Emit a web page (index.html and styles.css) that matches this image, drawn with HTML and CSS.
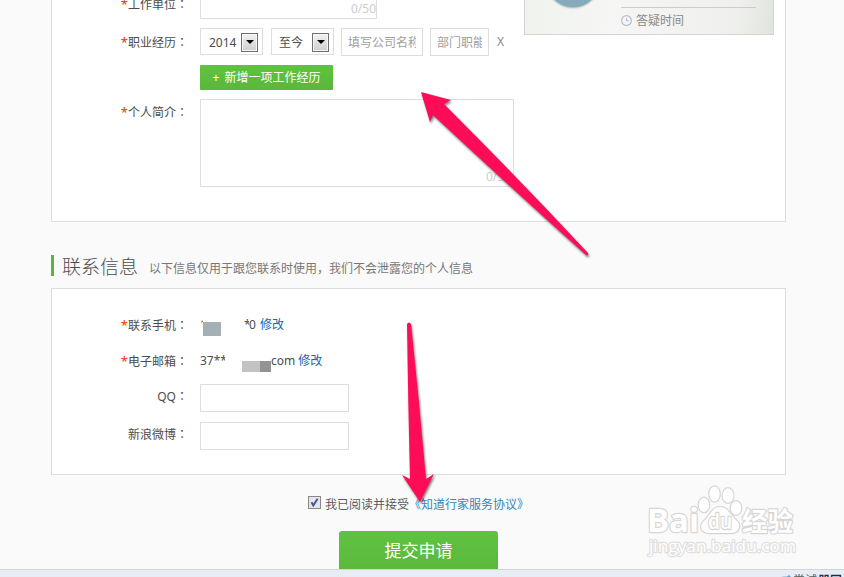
FILE: index.html
```html
<!DOCTYPE html>
<html lang="zh-CN">
<head>
<meta charset="utf-8">
<title>联系信息</title>
<link rel="stylesheet" href="styles.css">
</head>
<body>
<main class="page">
  <section class="card work">
    <div class="form">
      <div class="row unit"><div class="label"><i>*</i>工作单位<b lang="zh-TW">：</b></div><div class="field unit-field"><span class="count">0/50</span></div></div>
      <div class="row career"><div class="label"><i>*</i>职业经历<b lang="zh-TW">：</b></div>
        <div class="select">2014<span class="drop"></span></div>
        <div class="select until">至今<span class="drop"></span></div>
        <div class="field company"><span class="clip">填写公司名称</span></div>
        <div class="field dept"><span class="clip">部门职能</span></div>
        <span class="remove">X</span>
      </div>
      <button class="add"><span class="plus">+</span>新增一项工作经历</button>
      <div class="row bio"><div class="label"><i>*</i>个人简介<b lang="zh-TW">：</b></div><div class="field area"><span class="count">0/50</span></div></div>
    </div>
    <aside class="profile">
      <div class="avatar"></div>
      <div class="hours">
        <svg width="11" height="11" viewBox="0 0 11 11" fill="none" stroke="#b7bfd0"><circle cx="5.5" cy="5.5" r="4.9" stroke-width="1.2"/><path d="M5.5 2.8v3h2.3" stroke-width="1.1"/></svg>答疑时间
      </div>
    </aside>
  </section>
  <header class="heading"><h2>联系信息</h2><p>以下信息仅用于跟您联系时使用，我们不会泄露您的个人信息</p></header>
  <section class="card contact">
    <div class="row phone"><div class="label"><i>*</i>联系手机<b lang="zh-TW">：</b></div><span class="digit">1</span><span class="mask"></span><span class="tail"><span class="star">*</span>0</span><a>修改</a></div>
    <div class="row mail"><div class="label"><i>*</i>电子邮箱<b lang="zh-TW">：</b></div><span class="head">37**</span><span class="mask two"></span><span>com</span><a>修改</a></div>
    <div class="row qq"><div class="label">QQ<b lang="zh-TW">：</b></div><div class="field short"></div></div>
    <div class="row weibo"><div class="label">新浪微博<b lang="zh-TW">：</b></div><div class="field short"></div></div>
  </section>
  <div class="agree"><span class="check"><svg width="11" height="11" viewBox="0 0 11 11"><path d="M2.5 5.2 4.3 8.4 8.6 1.7" fill="none" stroke="#40558f" stroke-width="1.9"/></svg></span>我已阅读并接受<a>《知道行家服务协议》</a></div>
  <button class="submit">提交申请</button>
</main>
<footer class="status">
  <svg width="14" height="8" viewBox="0 0 14 8"><ellipse cx="6" cy="7" rx="6" ry="5" fill="#a9cce5"/><path d="M5 5 10 1l2 2-4 5" fill="#5aa5d8"/></svg>
  <span>尝试</span><strong>器国</strong>
</footer>
<svg class="watermark" width="160" height="84" viewBox="0 0 160 84">
  <g fill="#fff" stroke="#d6d6d6" stroke-width="2.4" stroke-linejoin="round" paint-order="stroke">
    <text class="brand" x="6" y="52" textLength="52" lengthAdjust="spacingAndGlyphs">Bai</text>
    <ellipse cx="63" cy="25" rx="5.2" ry="7.2"/><ellipse cx="73.500" cy="14" rx="5.2" ry="7.5"/><ellipse cx="87" cy="15.500" rx="5.4" ry="7.2"/><ellipse cx="95" cy="28" rx="5.2" ry="6.8"/>
    <path d="M79 27C87 27 90 36 96 41 101 46 97 53 90 53 84 53 74 53 68 53 60 53 58 46 63 41 69 36 71 27 79 27Z"/>
    <text class="du" x="67" y="49" textLength="24" lengthAdjust="spacingAndGlyphs">du</text>
    <text class="cn" x="101" y="51" textLength="51" lengthAdjust="spacingAndGlyphs">经验</text>
    <text class="domain" x="8" y="72" textLength="147" lengthAdjust="spacingAndGlyphs">jingyan.baidu.com</text>
  </g>
</svg>
<svg class="arrows" width="844" height="577" viewBox="0 0 844 577">
  <g fill="#ff0c59">
    <path d="M421 92 451 100 444 104Q520 180 588 253 589 256 586 255 508 185 433 115L430 122Z"/>
    <path d="M407 324Q409 321 411 324 419 400 426 479L434 474 420 502 402 475 410 479Q408 400 407 324Z"/>
  </g>
</svg>
</body>
</html>
```
FILE: styles.css
```css
* { box-sizing: border-box; }
html, body { margin: 0; height: 577px; overflow: hidden; }
body { position: relative; display: flex; flex-direction: column; background: #fafafa; color: #4c4c4c; font: 12px/18px "Noto Sans", "Noto Sans CJK SC", sans-serif; }
.page { width: 735px; height: 569px; margin-left: 51px; overflow: hidden; }
.card { background: #fff; border: 1px solid #ddd; }
.work { display: flex; height: 222px; border-top: 0; }
.form { width: 472px; flex: none; }
.row { display: flex; }
.label { width: 136px; margin-right: 12px; flex: none; text-align: right; white-space: nowrap; }
.label i { font: normal 13px/12px "Noto Sans", sans-serif; color: #e23a00; }
.label b { font-weight: normal; font-family: "Noto Sans CJK TC", sans-serif; }
.field { border: 1px solid #ddd; background: #fff; color: #a0a0a0; }
.count { color: #ccc; }
.unit { height: 28px; }
.unit .label { margin-top: -5px; }
.unit-field { width: 177px; height: 19px; border-top: 0; text-align: right; line-height: 18px; }
.career { height: 37px; }
.career .label { padding-top: 5px; }
.bio .label { padding-top: 4px; }
.select { display: flex; align-items: center; justify-content: space-between; width: 63px; height: 27px; margin-right: 8px; padding: 1px 4px 0 8px; border: 1px solid #ddd; line-height: 27px; }
.until { margin-right: 7px; padding-left: 7px; }
.drop { display: flex; width: 17px; height: 19px; border: 1px solid #707070; box-shadow: inset 0 0 0 1px #f6f6f6; background: linear-gradient(#f2f2f2, #cfcfcf); align-items: center; justify-content: center; }
.drop::after { content: ""; border: 4px solid transparent; border-top-color: #000; border-bottom: 0; }
.company, .dept { height: 28px; padding: 0 6px; line-height: 27px; }
.company { width: 82px; margin-right: 7px; }
.dept { width: 59px; margin-right: 8px; }
.clip { display: block; overflow: hidden; white-space: nowrap; }
.remove { line-height: 28px; color: #888; }
button { display: block; border: 0; padding: 0; background: linear-gradient(#5fc33f, #5ab73c); color: #fff; font-family: inherit; }
.add { width: 133px; height: 25px; margin: 0 0 9px 148px; border-radius: 1px; font-size: 12px; line-height: 24px; }
.plus { margin-right: 5px; }
.area { display: flex; justify-content: flex-end; align-items: flex-end; width: 314px; height: 88px; padding-right: 2px; }
.profile { display: flex; width: 250px; height: 35px; padding: 0 17px 0 21px; border: 1px solid #d3d5d2; border-top: 0; background: linear-gradient(100deg, #f0f2ee, #f6f7f5 35%, #eff0ed 85%, #dfe3dd); overflow: hidden; }
.avatar { width: 54px; height: 54px; margin: -47px 21px 0 0; border-radius: 50%; background: #83aabd; box-shadow: 0 1px 2px #9aa; }
.hours { display: flex; flex: 1; align-items: center; height: 26px; margin-top: 7px; gap: 4px; border-top: 1px solid #ccc; color: #888; }
.heading { display: flex; align-items: center; height: 21px; margin: 33px 0 12px; border-left: 3px solid #5ab541; padding-left: 8px; }
h2 { margin: 3px 11px 0 0; font-size: 19px; line-height: 21px; font-weight: 300; color: #4c4c4c; }
p { margin: 6px 0 0; color: #777; }
.contact { height: 187px; padding-top: 27px; }
.phone, .mail { height: 36px; }
.contact a { color: #2262b6; }
.digit { width: 3px; overflow: hidden; }
.mask { width: 18px; height: 14px; margin-top: 6px; background: #a5b0b6; }
.tail { display: flex; width: 12px; margin: 0 4px 0 23px; }
.star { width: 5px; overflow: hidden; }
.head { width: 25px; margin-right: 17px; overflow: hidden; }
.two { width: 29px; height: 11px; margin-top: 9px; background: linear-gradient(90deg, #c3c3c3 62%, #929494 62%); }
.mail a { margin-left: 3px; }
.qq { height: 38px; margin-top: -4px; }
.qq .label, .weibo .label { padding-top: 3px; }
.short { width: 149px; height: 28px; }
.agree { display: flex; height: 18px; margin: 21px 0 17px 257px; color: #5a5a5a; white-space: nowrap; }
.check { width: 13px; height: 13px; margin-right: 4px; border: 1px solid #888; background: #e2e5ea; }
.check svg { display: block; }
.agree a { color: #3784b8; }
.submit { width: 159px; height: 45px; margin-left: 288px; border-radius: 3px; font-size: 17px; line-height: 39px; padding-bottom: 6px; }
.status { display: flex; height: 8px; padding: 5px 0 0 779px; overflow: hidden; border-top: 1px solid #d0d6d5; background: #e8ecf4; color: #566; line-height: 12px; white-space: nowrap; }
.status svg { flex: none; margin-top: -1px; }
.status strong { color: #222b44; margin-left: 1px; }
.watermark { position: absolute; left: 641px; top: 480px; }
.brand, .du, .domain { font-family: "Open Sans", sans-serif; font-weight: 700; }
.brand { font-size: 33px; }
.du { font-size: 22px; font-weight: 600; }
.cn { font: 700 26px "Noto Sans CJK SC", sans-serif; }
.domain { font-size: 17px; font-weight: 400; stroke: #e0e0e0; }
.arrows { position: absolute; left: 0; top: 0; filter: drop-shadow(1px 2px 1px rgba(0, 0, 0, .5)); pointer-events: none; }
```
